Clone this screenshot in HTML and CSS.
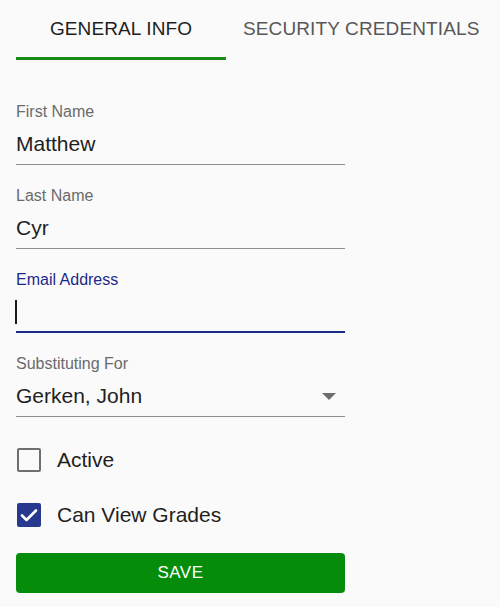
FILE: index.html
```html
<!DOCTYPE html>
<html>
<head>
<meta charset="utf-8">
<link rel="stylesheet" href="styles.css">
</head>
<body>
<div class="tabs">
  <div class="tab active">GENERAL INFO</div>
  <div class="tab">SECURITY CREDENTIALS</div>
</div>
<form class="form">
  <div class="field">
    <div class="label">First Name</div>
    <div class="value">Matthew</div>
  </div>
  <div class="field">
    <div class="label">Last Name</div>
    <div class="value">Cyr</div>
  </div>
  <div class="field focused">
    <div class="label">Email Address</div>
    <div class="value"><span class="cursor"></span></div>
  </div>
  <div class="field">
    <div class="label">Substituting For</div>
    <div class="value select"><span>Gerken, John</span><span class="arrow"></span></div>
  </div>
  <div class="check-row">
    <span class="box"></span>
    <span class="check-label">Active</span>
  </div>
  <div class="check-row">
    <span class="box checked"><svg viewBox="0 0 24 24" width="24" height="24"><polyline points="5,12.5 9.5,17 19,7.5" fill="none" stroke="#fff" stroke-width="2.6" stroke-linecap="round" stroke-linejoin="round"/></svg></span>
    <span class="check-label">Can View Grades</span>
  </div>
  <div class="save">SAVE</div>
</form>
</body>
</html>
```
FILE: styles.css
```css
* { box-sizing: border-box; }
body {
  margin: 0;
  background: #fafafa;
  font-family: "Liberation Sans", Arial, sans-serif;
  color: #1f1f1f;
}
.tabs {
  display: flex;
  padding-left: 16px;
}
.tab {
  height: 60px;
  display: flex;
  align-items: center;
  justify-content: center;
  font-size: 19px;
  letter-spacing: 0.12px;
  color: #575757;
  border-bottom: 3px solid transparent;
  padding: 0 17px;
}
.tab.active {
  width: 210px;
  color: #1e1e1e;
  border-bottom-color: #178a17;
}
.form {
  margin: 0;
  width: 345px;
  padding: 41px 0 0 16px;
}
.field {
  margin-bottom: 20px;
}
.label {
  font-size: 16px;
  line-height: 20px;
  padding-top: 1px;
  height: 21px;
  color: #6a6a6a;
}
.value {
  margin-top: 6px;
  height: 37px;
  padding-bottom: 4px;
  border-bottom: 1px solid #8c8c8c;
  font-size: 21px;
  line-height: 32px;
  display: flex;
  align-items: center;
}
.focused .label { color: #1c2a88; }
.focused .value {
  padding-bottom: 3px;
  border-bottom: 2px solid #1c2a88;
}
.cursor {
  display: block;
  width: 2px;
  height: 24px;
  margin-left: -1px;
  background: #1a1a1a;
}
.select {
  justify-content: space-between;
}
.arrow {
  width: 0;
  height: 0;
  border-left: 7px solid transparent;
  border-right: 7px solid transparent;
  border-top: 7px solid #6e6e6e;
  margin-right: 9px;
}
.check-row {
  height: 46px;
  display: flex;
  align-items: center;
  margin-bottom: 9px;
}
.box {
  width: 24px;
  height: 24px;
  margin-left: 1px;
  border: 2.5px solid #6f6f6f;
  border-radius: 2px;
  display: flex;
  align-items: center;
  justify-content: center;
}
.box.checked {
  border: none;
  background: #27398f;
}
.check-label {
  font-size: 21px;
  margin-left: 16px;
}
.save {
  margin-top: 15px;
  height: 40px;
  border-radius: 4px;
  background: #048c0a;
  color: #fff;
  font-size: 17px;
  letter-spacing: 0.5px;
  display: flex;
  align-items: center;
  justify-content: center;
}
```
